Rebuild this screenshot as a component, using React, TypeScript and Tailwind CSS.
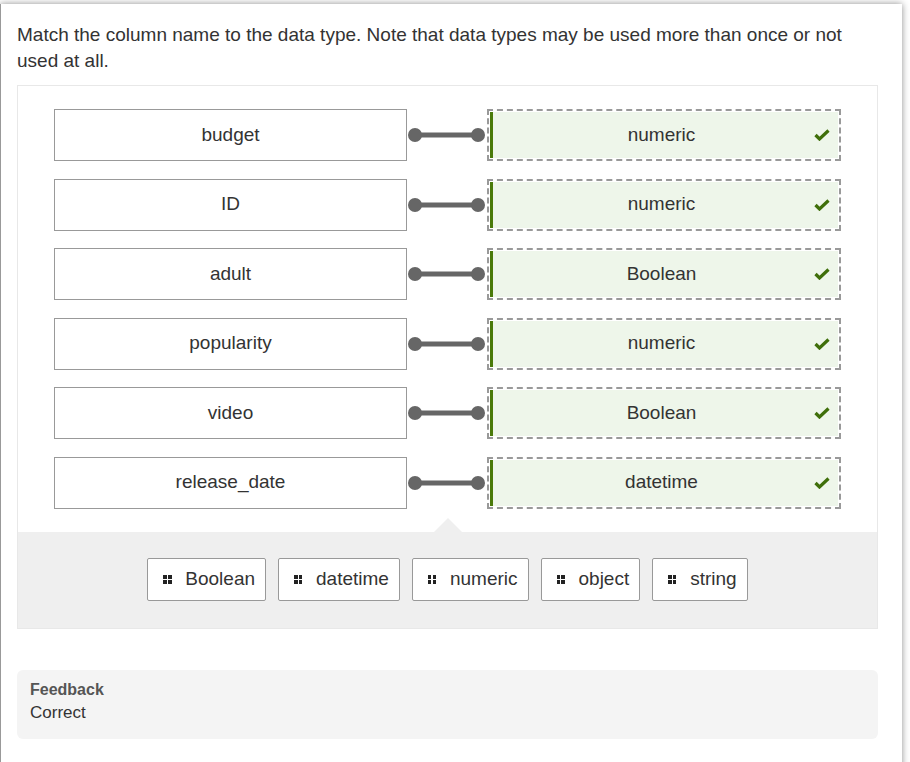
import React from 'react';

const pairs = [
  { name: 'budget', type: 'numeric' },
  { name: 'ID', type: 'numeric' },
  { name: 'adult', type: 'Boolean' },
  { name: 'popularity', type: 'numeric' },
  { name: 'video', type: 'Boolean' },
  { name: 'release_date', type: 'datetime' },
];

const choices = ['Boolean', 'datetime', 'numeric', 'object', 'string'];

const Connector: React.FC = () => (
  <svg width="80" height="52" viewBox="0 0 80 52" className="shrink-0">
    <line x1="8" y1="26" x2="71" y2="26" stroke="#666666" strokeWidth="5" />
    <circle cx="8" cy="26" r="7" fill="#666666" />
    <circle cx="71" cy="26" r="7" fill="#666666" />
  </svg>
);

const Check: React.FC = () => (
  <svg width="16" height="12" viewBox="0 0 16 12" className="shrink-0">
    <path d="M1.5 6 L5.5 10 L14.5 1.5" fill="none" stroke="#3f6f0a" strokeWidth="3.2" />
  </svg>
);

const Grip: React.FC = () => (
  <span className="grid grid-cols-2 gap-[1.5px] w-[8px] shrink-0">
    <span className="w-[3.5px] h-[3.5px] bg-[#222]" />
    <span className="w-[3.5px] h-[3.5px] bg-[#222]" />
    <span className="w-[3.5px] h-[3.5px] bg-[#222]" />
    <span className="w-[3.5px] h-[3.5px] bg-[#222]" />
  </span>
);

const App: React.FC = () => {
  return (
    <div className="w-[910px] h-[762px] bg-white overflow-hidden font-['Liberation_Sans',Arial,sans-serif] text-[#333]">
      <div className="mt-[4px] mr-[8px] h-[800px] bg-white border-l border-[#999] shadow-[0_0_7px_rgba(0,0,0,0.45)] pl-[16px] pr-[24px] pt-[18px]">
        <p className="text-[19px] leading-[26px] pr-[10px]">
          Match the column name to the data type. Note that data types may be used more than once or not used at all.
        </p>

        <div className="mt-[11px] border border-[#e8e8e8] bg-white">
          <div className="flex flex-col gap-[17.5px] px-[36px] pt-[23px] pb-[23px]">
            {pairs.map((p) => (
              <div key={p.name} className="flex items-center h-[52px]">
                <div className="w-[354px] h-[52px] border border-[#999] flex items-center justify-center text-[19px]">
                  {p.name}
                </div>
                <Connector />
                <div className="w-[355px] h-[52px] border-2 border-dashed border-[#999] p-[1px]">
                  <div className="h-full border-l-[3px] border-[#4a7a0a] bg-[#eef6ea] flex items-center pl-[6px] pr-[8px]">
                    <span className="flex-1 text-center text-[19px] pl-[10px]">{p.type}</span>
                    <Check />
                  </div>
                </div>
              </div>
            ))}
          </div>

          <div className="relative bg-[#efefef] h-[96px] flex items-center justify-center gap-[12px]">
            <div className="absolute left-[416px] -top-[14px] w-0 h-0 border-l-[14px] border-r-[14px] border-b-[14px] border-l-transparent border-r-transparent border-b-[#efefef]" />
            {choices.map((c) => (
              <div
                key={c}
                className="h-[43px] bg-white border border-[#999] rounded-[2px] flex items-center gap-[14px] pl-[15px] pr-[10px] text-[19px]"
              >
                <Grip />
                <span>{c}</span>
              </div>
            ))}
          </div>
        </div>

        <div className="mt-[41px] bg-[#f4f4f4] rounded-[6px] h-[69px] px-[13px] pt-[10px]">
          <div className="font-bold text-[16px] leading-[20px] text-[#555]">Feedback</div>
          <div className="text-[17px] leading-[24px] mt-[1px]">Correct</div>
        </div>
      </div>
    </div>
  );
};

export default App;
